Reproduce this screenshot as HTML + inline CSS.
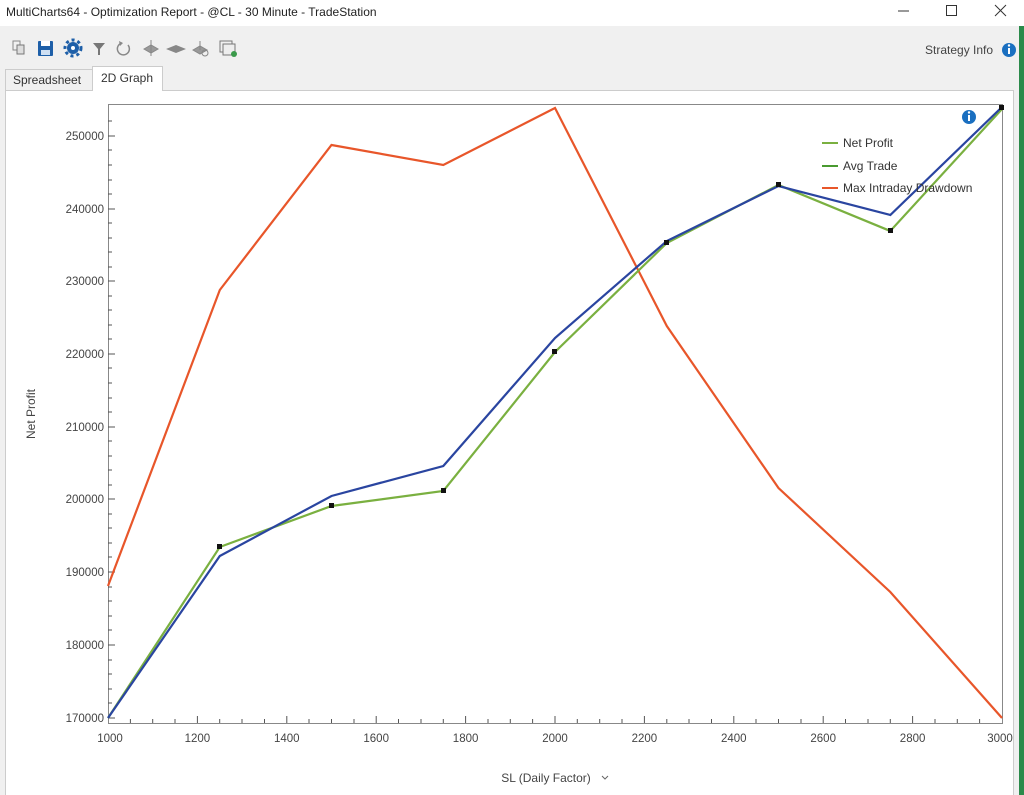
<!DOCTYPE html>
<html><head><meta charset="utf-8"><style>
html,body{margin:0;padding:0;width:1024px;height:795px;overflow:hidden;background:#f0f0f0;font-family:"Liberation Sans",sans-serif;}
</style></head><body>
<svg width="1024" height="795" viewBox="0 0 1024 795" xmlns="http://www.w3.org/2000/svg" font-family="Liberation Sans, sans-serif">
<rect x="0" y="0" width="1024" height="795" fill="#f0f0f0"/>
<rect x="0" y="0" width="1024" height="26" fill="#ffffff"/>
<text x="6" y="16" font-size="12" fill="#222">MultiCharts64 - Optimization Report - @CL - 30 Minute - TradeStation</text>
<line x1="898" y1="11" x2="909" y2="11" stroke="#333" stroke-width="1"/>
<rect x="946.5" y="5.5" width="10" height="10" fill="none" stroke="#333"/>
<path d="M995 5 L1006 16 M1006 5 L995 16" stroke="#333" stroke-width="1"/>
<rect x="1019" y="26" width="5" height="769" fill="#2a8a4a"/>
<!-- toolbar icons -->
<g>
<rect x="13" y="41" width="7" height="9" fill="none" stroke="#888"/><rect x="17" y="45" width="7" height="9" fill="#ddd" stroke="#777"/>
<rect x="38" y="41" width="15" height="15" rx="1" fill="#1e5fa8"/><rect x="41" y="41" width="9" height="5" fill="#fff"/><rect x="41" y="50" width="9" height="5" fill="#cfe0f3"/>
<circle cx="73" cy="48" r="6" fill="#1e5fa8"/><circle cx="73" cy="48" r="8" fill="none" stroke="#1e5fa8" stroke-width="3" stroke-dasharray="3 3"/><circle cx="73" cy="48" r="2" fill="#fff"/>
<path d="M93 43 L105 43 L100 49 L100 55 L98 55 L98 49 Z" fill="#777"/>
<path d="M128 45 A6 6 0 1 1 122 43" fill="none" stroke="#888" stroke-width="1.5"/><path d="M119 41 L123 43 L120 46Z" fill="#888"/>
<path d="M144 49 L151 45 L158 49 L151 53Z M151 40 L151 56" fill="#999" stroke="#888"/>
<path d="M166 49 L176 45 L186 49 L176 53Z" fill="#888"/>
<path d="M193 50 L200 46 L207 50 L200 54Z M200 41 L200 50" fill="#999" stroke="#888"/><circle cx="205" cy="53" r="3" fill="none" stroke="#888"/>
<rect x="220" y="41" width="12" height="11" fill="none" stroke="#777"/><rect x="223" y="44" width="12" height="11" fill="#eee" stroke="#777"/><circle cx="234" cy="54" r="3" fill="#3a9a4a"/>
</g>
<text x="925" y="54" font-size="12" fill="#444">Strategy Info</text>
<circle cx="1009" cy="50" r="7" fill="#1a6fc0"/><rect x="1008" y="48" width="2" height="6" fill="#fff"/><circle cx="1009" cy="45.5" r="1.2" fill="#fff"/>
<!-- tabs -->
<rect x="5.5" y="69.5" width="87" height="21" fill="#f0f0f0" stroke="#ccc"/>
<text x="13" y="84" font-size="12" fill="#333">Spreadsheet</text>
<rect x="92.5" y="66.5" width="70" height="25" fill="#fff" stroke="#ccc"/>
<text x="101" y="82" font-size="12" fill="#333">2D Graph</text>
<!-- panel -->
<rect x="5.5" y="90.5" width="1008" height="710" fill="#fff" stroke="#ccc"/>
<rect x="93" y="89" width="69" height="3" fill="#fff"/>
<!-- frame -->
<rect x="108.5" y="104.5" width="894" height="619" fill="#fff" stroke="#888"/>
<g stroke="#555" stroke-width="1">
<path d="M108 136h7M108 209h7M108 281h7M108 354h7M108 427h7M108 499h7M108 572h7M108 645h7M108 718h7"/>
<path d="M108 121h4M108 150h4M108 165h4M108 180h4M108 194h4M108 223h4M108 238h4M108 252h4M108 267h4M108 296h4M108 310h4M108 325h4M108 339h4M108 368h4M108 383h4M108 398h4M108 412h4M108 441h4M108 456h4M108 470h4M108 485h4M108 514h4M108 528h4M108 543h4M108 557h4M108 587h4M108 601h4M108 616h4M108 630h4M108 660h4M108 674h4M108 689h4M108 703h4"/>
<path d="M197.4 723v-7M286.8 723v-7M376.2 723v-7M465.6 723v-7M555 723v-7M644.4 723v-7M733.8 723v-7M823.2 723v-7M912.6 723v-7"/>
<path d="M130.4 723v-4M152.7 723v-4M175 723v-4M219.7 723v-4M242 723v-4M264.5 723v-4M309 723v-4M331.5 723v-4M354 723v-4M398.5 723v-4M421 723v-4M443.3 723v-4M488 723v-4M510.3 723v-4M532.6 723v-4M577.3 723v-4M599.7 723v-4M622 723v-4M666.8 723v-4M689 723v-4M711.5 723v-4M756 723v-4M778.5 723v-4M801 723v-4M845.5 723v-4M868 723v-4M890.3 723v-4M935 723v-4M957.3 723v-4M979.6 723v-4"/>
</g>
<g font-size="11.5" fill="#444" text-anchor="end">
<text x="104" y="140">250000</text><text x="104" y="213">240000</text><text x="104" y="285">230000</text><text x="104" y="358">220000</text><text x="104" y="431">210000</text><text x="104" y="503">200000</text><text x="104" y="576">190000</text><text x="104" y="649">180000</text><text x="104" y="722">170000</text>
</g>
<g font-size="11.5" fill="#444" text-anchor="middle">
<text x="110" y="742">1000</text><text x="197.4" y="742">1200</text><text x="286.8" y="742">1400</text><text x="376.2" y="742">1600</text><text x="465.6" y="742">1800</text><text x="555" y="742">2000</text><text x="644.4" y="742">2200</text><text x="733.8" y="742">2400</text><text x="823.2" y="742">2600</text><text x="912.6" y="742">2800</text><text x="1000" y="742">3000</text>
</g>
<text x="35" y="414" font-size="12" fill="#444" text-anchor="middle" transform="rotate(-90 35 414)">Net Profit</text>
<text x="546" y="782" font-size="12" fill="#444" text-anchor="middle">SL (Daily Factor)</text>
<path d="M602 776 L605 779 L608 776" fill="none" stroke="#666"/>
<!-- series -->
<polyline fill="none" stroke="#e8562a" stroke-width="2.2" points="108,586 219.8,290 331.5,145 443.3,165 555,108 666.8,326 778.5,488 890.3,592 1002,718"/>
<polyline fill="none" stroke="#7ab040" stroke-width="2.2" points="108,718 219.8,547 331.5,506 443.3,491 555,352 666.8,243 778.5,185 890.3,231 1002,109"/>
<polyline fill="none" stroke="#2a45a0" stroke-width="2.2" points="108,718 219.8,556 331.5,496 443.3,466 555,338 666.8,241 778.5,186 890.3,215 1002,107"/>
<g fill="#111">
<rect x="217" y="544" width="5" height="5"/><rect x="329" y="503" width="5" height="5"/><rect x="441" y="488" width="5" height="5"/><rect x="552" y="349" width="5" height="5"/><rect x="664" y="240" width="5" height="5"/><rect x="776" y="182" width="5" height="5"/><rect x="888" y="228" width="5" height="5"/><rect x="999" y="105" width="5" height="5"/>
</g>
<!-- legend -->
<line x1="822" y1="143" x2="838" y2="143" stroke="#7ab040" stroke-width="2"/>
<text x="843" y="147" font-size="12" fill="#333">Net Profit</text>
<line x1="822" y1="166" x2="838" y2="166" stroke="#4a9a30" stroke-width="2"/>
<text x="843" y="170" font-size="12" fill="#333">Avg Trade</text>
<line x1="822" y1="188" x2="838" y2="188" stroke="#e8562a" stroke-width="2"/>
<text x="843" y="192" font-size="12" fill="#333">Max Intraday Drawdown</text>
<circle cx="969" cy="117" r="7" fill="#1a6fc0"/><rect x="968" y="115" width="2" height="6" fill="#fff"/><circle cx="969" cy="112.5" r="1.2" fill="#fff"/>
</svg>
</body></html>
